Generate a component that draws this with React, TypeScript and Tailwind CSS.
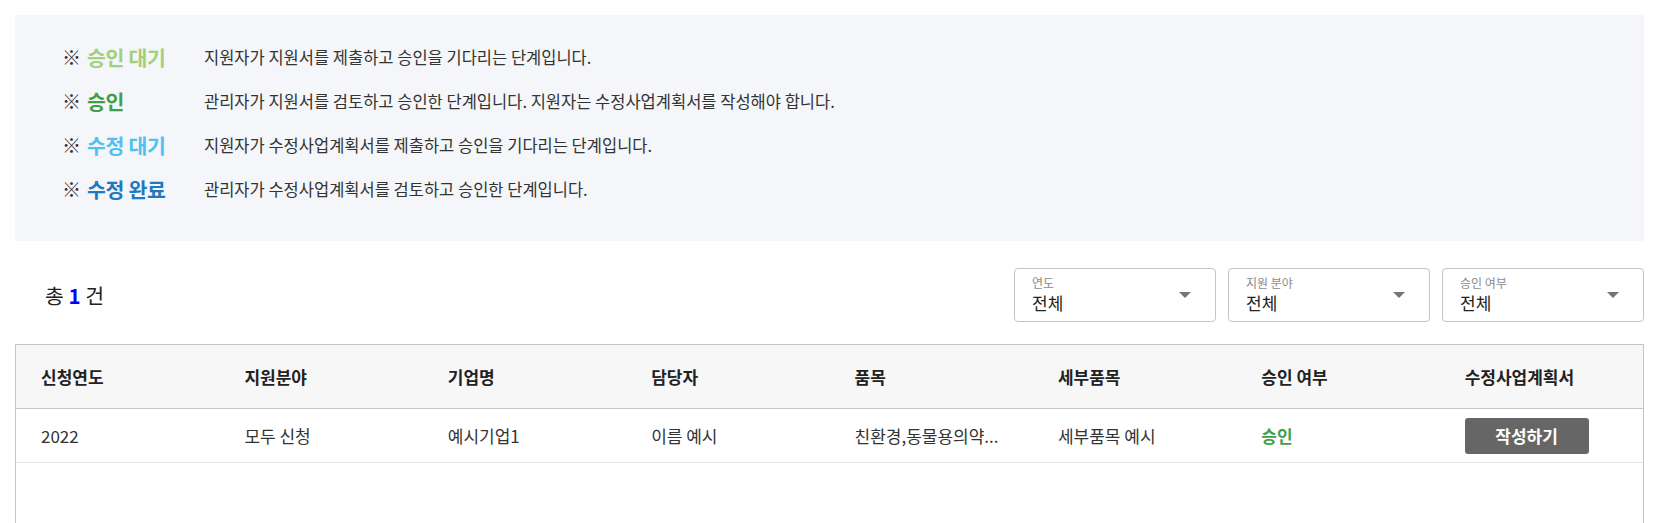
const legend = [
  { label: "승인 대기", color: "text-[#a3cf7a]", text: "지원자가 지원서를 제출하고 승인을 기다리는 단계입니다." },
  { label: "승인", color: "text-[#3f9f45]", text: "관리자가 지원서를 검토하고 승인한 단계입니다. 지원자는 수정사업계획서를 작성해야 합니다." },
  { label: "수정 대기", color: "text-[#4fc0f2]", text: "지원자가 수정사업계획서를 제출하고 승인을 기다리는 단계입니다." },
  { label: "수정 완료", color: "text-[#1f78c1]", text: "관리자가 수정사업계획서를 검토하고 승인한 단계입니다." },
];

const filters = [
  { label: "연도", value: "전체" },
  { label: "지원 분야", value: "전체" },
  { label: "승인 여부", value: "전체" },
];

const columns = ["신청연도", "지원분야", "기업명", "담당자", "품목", "세부품목", "승인 여부", "수정사업계획서"];

function Select({ label, value }: { label: string; value: string }) {
  return (
    <div className="relative w-[202px] h-[54px] rounded-[4px] border border-[#c4c4c4] bg-white pl-[17px] pt-[7px]">
      <div className="text-[12px] leading-[14px] text-[#8a8a8a]">{label}</div>
      <div className="mt-[2px] text-[17px] leading-[22px] text-[#222]">{value}</div>
      <svg
        className="absolute right-[24px] top-[23px]"
        width="12"
        height="6"
        viewBox="0 0 12 6"
      >
        <polygon points="0,0 12,0 6,6" fill="#757575" />
      </svg>
    </div>
  );
}

export default function App() {
  return (
    <div className="min-h-screen bg-white px-[15px] pt-[15px] font-['Noto_Sans_CJK_KR','Noto_Sans',sans-serif] text-[#333]">
      {/* 상태 안내 */}
      <div className="h-[226px] bg-[#f4f6f9] pl-[47px] pt-[20px]">
        {legend.map((item) => (
          <div key={item.label} className="flex h-[44px] items-center">
            <div className="flex w-[142px] shrink-0 items-center">
              <span className="w-[25px] text-[19px] text-[#333]">※</span>
              <span className={`text-[20.5px] font-bold tracking-[-0.3px] ${item.color}`}>{item.label}</span>
            </div>
            <span className="text-[16.5px] text-[#333]">{item.text}</span>
          </div>
        ))}
      </div>

      {/* 건수 + 필터 */}
      <div className="mt-[27px] flex h-[54px] items-center justify-between">
        <div className="pl-[30px] text-[20.5px] text-[#222]">
          총 <span className="font-bold text-[#0000ff]">1</span> 건
        </div>
        <div className="flex gap-[12px]">
          {filters.map((f) => (
            <Select key={f.label} label={f.label} value={f.value} />
          ))}
        </div>
      </div>

      {/* 목록 */}
      <div className="mt-[22px] border border-[#c4c4c4]">
        <div className="grid h-[64px] grid-cols-8 items-center border-b border-[#c4c4c4] bg-[#f7f7f7]">
          {columns.map((c) => (
            <div key={c} className="px-[25px] text-[17px] font-bold text-[#222]">
              {c}
            </div>
          ))}
        </div>
        <div className="grid h-[54px] grid-cols-8 items-center border-b border-[#e2e2e2] text-[17px] text-[#333]">
          <div className="px-[25px]">2022</div>
          <div className="px-[25px]">모두 신청</div>
          <div className="px-[25px]">예시기업1</div>
          <div className="px-[25px]">이름 예시</div>
          <div className="whitespace-nowrap px-[25px]">친환경,동물용의약...</div>
          <div className="px-[25px]">세부품목 예시</div>
          <div className="px-[25px] font-bold text-[#43a047]">승인</div>
          <div className="px-[25px]">
            <button className="h-[36px] w-[124px] rounded-[3px] bg-[#666] text-[17px] font-bold text-white">
              작성하기
            </button>
          </div>
        </div>
        <div className="h-[200px]" />
      </div>
    </div>
  );
}
